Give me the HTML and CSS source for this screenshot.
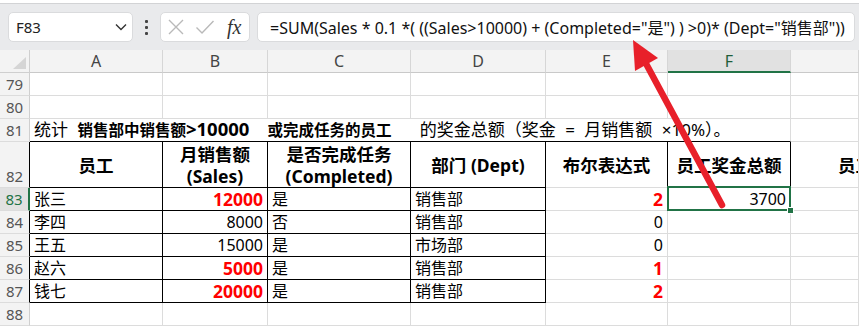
FILE: index.html
```html
<!DOCTYPE html>
<html lang="zh-CN">
<head>
<meta charset="utf-8">
<title>Sheet</title>
<link rel="stylesheet" href="styles.css">
</head>
<body>
<div class="app">
  <div class="topstrip"></div>
  <div class="fbar">
    <div class="namebox">
      <span class="ref">F83</span>
      <svg class="chev" width="12" height="8" viewBox="0 0 12 8"><path d="M1 1.5 L6 6.5 L11 1.5" fill="none" stroke="#333" stroke-width="1.4"/></svg>
    </div>
    <div class="dots"><i></i><i></i><i></i></div>
    <div class="fxbox">
      <svg width="18" height="16" viewBox="0 0 18 16"><path d="M2 1 L16 15 M16 1 L2 15" stroke="#b9b9b9" stroke-width="1.4" fill="none"/></svg>
      <svg width="20" height="16" viewBox="0 0 20 16"><path d="M1.5 8.5 L7 14 L18.5 2" stroke="#b9b9b9" stroke-width="1.4" fill="none"/></svg>
      <span class="fx">fx</span>
    </div>
    <div class="formula">=SUM(Sales * 0.1 *( ((Sales&gt;10000) + (Completed="是") ) &gt;0)* (Dept="销售部"))</div>
  </div>

  <div class="sheet">
    <!-- column header row -->
    <div class="c corner"><svg width="14" height="13" viewBox="0 0 14 13"><polygon points="13,0 13,12 0,12" fill="#d5d5d5"/></svg></div>
    <div class="c ch">A</div>
    <div class="c ch">B</div>
    <div class="c ch">C</div>
    <div class="c ch">D</div>
    <div class="c ch">E</div>
    <div class="c ch selcol">F</div>
    <div class="c ch"></div>

    <!-- 79 -->
    <div class="c rh">79</div>
    <div class="c"></div><div class="c"></div><div class="c"></div><div class="c"></div><div class="c"></div><div class="c"></div><div class="c"></div>
    <!-- 80 -->
    <div class="c rh">80</div>
    <div class="c"></div><div class="c"></div><div class="c"></div><div class="c"></div><div class="c"></div><div class="c"></div><div class="c"></div>
    <!-- 81 -->
    <div class="c rh">81</div>
    <div class="c title bk-b"><span class="ttl">统计 <b>销售部中销售额<span class="lt">&gt;10000</span>  或完成任务的员工</b>   的奖金总额（奖金 = 月销售额 ×10%）。</span></div>
    <div class="c"></div>

    <!-- 82 -->
    <div class="c rh tall bk-r">82</div>
    <div class="c th bk-r bk-b">员工</div>
    <div class="c th bk-r bk-b">月销售额<br>(Sales)</div>
    <div class="c th bk-r bk-b">是否完成任务<br>(Completed)</div>
    <div class="c th bk-r bk-b">部门 (Dept)</div>
    <div class="c th bk-r">布尔表达式</div>
    <div class="c th bk-r">员工奖金总额</div>
    <div class="c th gh">员工奖金总额</div>

    <!-- 83 -->
    <div class="c rh selrow">83</div>
    <div class="c bk-r bk-b">张三</div>
    <div class="c num bk-r bk-b"><span class="hot">12000</span></div>
    <div class="c bk-r bk-b">是</div>
    <div class="c bk-r bk-b">销售部</div>
    <div class="c num"><span class="hot">2</span></div>
    <div class="c num sel">3700<span class="handle"></span></div>
    <div class="c"></div>

    <!-- 84 -->
    <div class="c rh bk-r">84</div>
    <div class="c bk-r bk-b">李四</div>
    <div class="c num bk-r bk-b">8000</div>
    <div class="c bk-r bk-b">否</div>
    <div class="c bk-r bk-b">销售部</div>
    <div class="c num">0</div>
    <div class="c"></div>
    <div class="c"></div>

    <!-- 85 -->
    <div class="c rh bk-r">85</div>
    <div class="c bk-r bk-b">王五</div>
    <div class="c num bk-r bk-b">15000</div>
    <div class="c bk-r bk-b">是</div>
    <div class="c bk-r bk-b">市场部</div>
    <div class="c num">0</div>
    <div class="c"></div>
    <div class="c"></div>

    <!-- 86 -->
    <div class="c rh bk-r">86</div>
    <div class="c bk-r bk-b">赵六</div>
    <div class="c num bk-r bk-b"><span class="hot">5000</span></div>
    <div class="c bk-r bk-b">是</div>
    <div class="c bk-r bk-b">销售部</div>
    <div class="c num"><span class="hot">1</span></div>
    <div class="c"></div>
    <div class="c"></div>

    <!-- 87 -->
    <div class="c rh bk-r">87</div>
    <div class="c bk-r bk-b">钱七</div>
    <div class="c num bk-r bk-b"><span class="hot">20000</span></div>
    <div class="c bk-r bk-b">是</div>
    <div class="c bk-r bk-b">销售部</div>
    <div class="c num"><span class="hot">2</span></div>
    <div class="c"></div>
    <div class="c"></div>

    <!-- 88 -->
    <div class="c rh">88</div>
    <div class="c"></div><div class="c"></div><div class="c"></div><div class="c"></div><div class="c"></div><div class="c"></div><div class="c"></div>
  </div>

  <svg class="arrow" width="859" height="326" viewBox="0 0 859 326">
    <line x1="722" y1="205" x2="643" y2="58" stroke="#e8202a" stroke-width="6.5" stroke-linecap="round"/>
    <polygon points="633,40 658,58 635,71" fill="#e8202a"/>
  </svg>
</div>
</body>
</html>
```

FILE: styles.css
```css
* { box-sizing: border-box; }
html, body { margin: 0; padding: 0; }
body {
  width: 859px;
  height: 326px;
  overflow: hidden;
  background: #ffffff;
  font-family: "Noto Sans", "Noto Sans CJK SC", sans-serif;
  color: #000;
}
.app { position: relative; width: 859px; height: 326px; overflow: hidden; }

.topstrip {
  height: 4px;
  background: #ffffff;
  border-bottom: 1px solid #d2d3d5;
}

.fbar {
  height: 46px;
  background: #e9eaec;
  display: flex;
  align-items: center;
  padding-left: 8px;
}
.namebox {
  width: 125px;
  height: 30px;
  background: #fff;
  border: 1px solid #dadbdd;
  border-radius: 5px;
  display: flex;
  align-items: center;
  justify-content: space-between;
  padding: 0 5px 0 7px;
  font-size: 15px;
  color: #222;
}
.dots {
  width: 27px;
  display: flex;
  flex-direction: column;
  align-items: center;
  gap: 3px;
}
.dots i { display: block; width: 3px; height: 3px; background: #444; border-radius: 1px; }
.fxbox {
  width: 90px;
  height: 30px;
  background: #fff;
  border: 1px solid #dadbdd;
  border-radius: 5px;
  display: flex;
  align-items: center;
  gap: 10px;
  padding-left: 6px;
}
.fx {
  font-family: "Liberation Serif", "DejaVu Serif", serif;
  font-style: italic;
  font-size: 20px;
  color: #333;
  line-height: 1;
  margin-left: 2px;
}
.formula {
  margin-left: 7px;
  width: 598px;
  height: 30px;
  background: #fff;
  border: 1px solid #dadbdd;
  border-radius: 5px;
  display: flex;
  align-items: center;
  padding-left: 12px;
  font-size: 16px;
  white-space: nowrap;
  overflow: hidden;
  color: #111;
}

.sheet {
  display: grid;
  grid-template-columns: 30px 133px 105px 143px 135px 122px 123px 68px;
  grid-template-rows: 23px 23px 23px 23px 46px repeat(6, 23px);
}
.c {
  border-right: 1px solid #dcdcdc;
  border-bottom: 1px solid #dcdcdc;
  padding: 0 4px;
  font-size: 16px;
  line-height: 22px;
  display: flex;
  align-items: center;
  white-space: nowrap;
  overflow: hidden;
  min-width: 0;
}
.corner {
  background: #f3f3f3;
  border-color: #cfcfcf;
  justify-content: flex-end;
  align-items: flex-end;
  padding: 0 2px 2px 0;
}
.ch {
  background: #f3f3f3;
  border-right-color: #d6d6d6;
  border-bottom-color: #c9c9c9;
  justify-content: center;
  color: #444;
  font-size: 16px;
}
.ch.selcol {
  background: #e1e1e1;
  color: #1f5e3a;
  border-bottom: 2px solid #217346;
}
.rh {
  background: #f3f3f3;
  border-right-color: #cfcfcf;
  border-bottom-color: #dcdcdc;
  justify-content: center;
  align-items: flex-end;
  color: #555;
  font-size: 15px;
  padding: 0;
}
.rh.selrow {
  background: #e1e1e1;
  color: #217346;
  border-right: 2px solid #217346;
}
.rh.bk-r { border-right-color: #000; }

.title {
  grid-column: span 6;
  font-size: 16px;
  overflow: visible;
}
.ttl {
  white-space: pre;
  word-spacing: 5px;
  font-size: 17px;
  line-height: 20px;
}
.ttl b { font-weight: 700; font-size: 15.5px; line-height: 20px; }
.ttl .lt { font-size: 18.5px; line-height: 18px; }

.th {
  font-weight: 700;
  font-size: 17.5px;
  line-height: 22px;
  text-align: center;
  justify-content: center;
  padding-top: 1px;
}
.th.gh { justify-content: flex-start; padding-left: 47px; }

.num { justify-content: flex-end; }
.hot { color: #ff0000; font-weight: 700; font-size: 17.5px; }

.bk-r { border-right-color: #000; }
.bk-b { border-bottom-color: #000; }

.sel { position: relative; overflow: visible; }
.sel::after {
  content: "";
  position: absolute;
  top: -2px;
  left: -1px;
  right: -1px;
  bottom: -1px;
  border: 2px solid #217346;
  z-index: 2;
}
.handle {
  position: absolute;
  right: -4px;
  bottom: -4px;
  width: 7px;
  height: 7px;
  background: #217346;
  border: 1px solid #fff;
  z-index: 3;
}

.arrow {
  position: absolute;
  left: 0;
  top: 0;
  pointer-events: none;
  z-index: 10;
}
```
